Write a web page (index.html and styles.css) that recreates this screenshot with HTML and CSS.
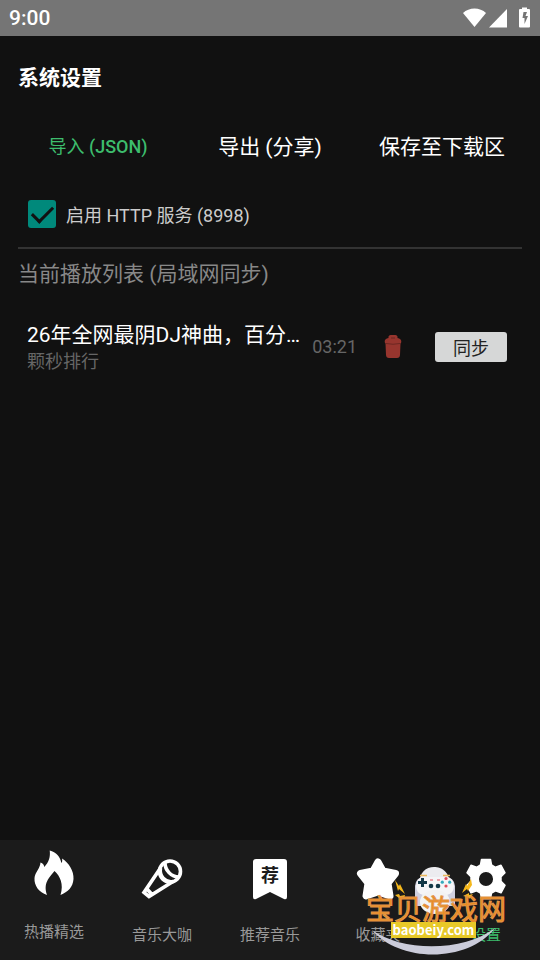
FILE: index.html
```html
<!DOCTYPE html>
<html lang="zh-CN">
<head>
<meta charset="utf-8">
<meta name="viewport" content="width=device-width, initial-scale=1">
<title>系统设置</title>
<link rel="stylesheet" href="styles.css">
</head>
<body>
<div class="app">
  <header class="status">
    <span class="clock">9:00</span>
    <svg class="status-icons" width="70" height="22" viewBox="0 0 70 22" fill="#fff" aria-hidden="true">
      <path d="M0 6C6 0 17 0 23 6L11.500 20Z"/>
      <path d="M26 20.500L44 2V20.500Z"/>
      <path fill-rule="evenodd" d="M57 2h2V0.500h5V2h2q1 0 1 1v16.500q0 1-1 1h-9q-1 0-1-1V3q0-1 1-1zM60.500 5l-1 6h2v6l3.500-8h-2.500l1.500-4z"/>
    </svg>
  </header>

  <main class="content">
    <h1 class="title">系统设置</h1>
    <div class="actions">
      <button class="action action-import" type="button">导入 <span class="format">(JSON)</span></button>
      <button class="action" type="button">导出 (分享)</button>
      <button class="action" type="button">保存至下载区</button>
    </div>
    <label class="service" for="http">
      <input class="check" type="checkbox" id="http" checked>
      <span>启用 HTTP 服务 (8998)</span>
    </label>
    <h2 class="subtitle">当前播放列表 (局域网同步)</h2>
    <ul class="list">
      <li class="song">
        <div class="info">
          <div class="name">26年全网最阴DJ神曲，百分…</div>
          <div class="artist">颗秒排行</div>
        </div>
        <span class="time">03:21</span>
        <button class="delete" type="button" aria-label="删除">
          <svg width="18" height="26" viewBox="0 0 18 26" aria-hidden="true">
            <path fill="#97352e" d="M4.500 4V2.500Q5 1 6.500 1h5Q13 1 13.500 2.500V4q3.800.5 3.800 3.500Q17.300 9 16.500 9.500L16 21q-.2 3-3 3H5q-2.800 0-3-3L1.500 9.500Q.7 9 .7 7.500Q.7 4.500 4.500 4z"/>
            <path d="M7 4h4M2 9.500Q9 11 16 9.500" fill="none" stroke="#6d2722" stroke-width="1"/>
          </svg>
        </button>
        <button class="sync" type="button">同步</button>
      </li>
    </ul>
  </main>

  <footer class="bottom">
    <nav class="tabs">
      <a class="tab tab-hot" href="#hot">
        <svg class="tab-icon" width="42" height="48" viewBox="0 0 42 48" aria-hidden="true">
          <path fill="#fff" d="M14 46C6 43 1 37 1.500 29C2 23 7 20 7.500 13.500C10 14 11 16 11.300 18C16 13 17.500 8 16.700 1.500C23 3 27.500 8 28.300 14C29.200 13 29.500 11.500 29 9.500C36 14 41 22 40.500 30C40 38 35 43 27.500 46C31 35 27 27 21.500 22C16 29 10 34 14 46Z"/>
        </svg>
        <span>热播精选</span>
      </a>
      <a class="tab" href="#artists">
        <svg class="tab-icon" width="42" height="48" viewBox="0 0 42 48" fill="none" stroke="#fff" stroke-width="3.600" aria-hidden="true">
          <circle cx="29" cy="16.500" r="10.500"/>
          <path d="M19.500 13L3 37.500L8 41.500L32 26.500M19.500 13C18 21 24 28 32 26.500M24 8C24 15 30 22 38 22M6 34L11 39.500"/>
        </svg>
        <span>音乐大咖</span>
      </a>
      <a class="tab" href="#recommend">
        <span class="tab-icon ribbon">
          <svg width="36" height="48" viewBox="0 0 36 48" aria-hidden="true">
            <path fill="#fff" d="M4 4h28q3 0 3 3v35q0 3-3 2L18 37L4 44q-3 1-3-2V7q0-3 3-3z"/>
          </svg>
          <b class="ribbon-text">荐</b>
        </span>
        <span>推荐音乐</span>
      </a>
      <a class="tab" href="#favorites">
        <svg class="tab-icon" width="44" height="48" viewBox="0 0 44 48" aria-hidden="true">
          <path fill="#fff" stroke="#fff" stroke-width="7" stroke-linejoin="round" d="M22 7l5 9 12.500 2.500-7.500 9.500 2 13-12-4-12 4 2-13-7.500-9.500L17 16z"/>
        </svg>
        <span>收藏夹</span>
      </a>
      <a class="tab tab-active" href="#settings">
        <svg class="tab-icon" width="42" height="48" viewBox="0 0 42 48" aria-hidden="true">
          <path fill="#fff" stroke="#fff" stroke-width="1.500" stroke-linejoin="round" fill-rule="evenodd" d="M16.500 4.500h9l1 5.500 4 2.300 5.500-2 4 7.500-4 4v4.500l4 4-4 7.500-5.500-2-4 2.300-1 5.400h-9l-1-5.400-4-2.300-5.500 2-4-7.500 4-4v-4.500l-4-4 4-7.500 5.500 2 4-2.300zM21 16.200a7.800 7.800 0 1 0 0 15.600a7.800 7.800 0 1 0 0-15.600z"/>
        </svg>
        <span>设置</span>
      </a>
    </nav>
    <div class="brand">
      <svg class="brand-art" width="144" height="94" viewBox="0 0 144 94" aria-hidden="true">
        <g fill="#f5b81c">
          <path d="M31 14l4 6 1-2 5 10-6-5-1 2zM31 29l4-1 1 2 5-1-1 4-4-2-1 1z"/>
          <path d="M107 13l-4 7-1-2-4 9 5-4 1 2 4-6zM99 30l6-3v2l4-1-4 5-1-2z"/>
        </g>
        <path fill="#ececef" d="M55 20C55 6 62 1 70 1s16 5 16 19z"/>
        <path fill="#cfd0df" d="M60 11Q52 11 51 20L51 40H91L91 20Q90 11 81 11L70 14z"/>
        <path fill="#f5f5f7" d="M60 11Q53 11 52 20Q52 27 59 29L70 26L83 29Q90 27 90 20Q89 11 82 11z"/>
        <ellipse cx="71" cy="36" rx="15" ry="12" fill="#f3f3f3"/>
        <path stroke="#e9b75a" stroke-width="1.500" d="M56 9.500h7M79 9.500h7"/>
        <path stroke="#123747" stroke-width="3" d="M54 16.500h9M58.500 12v9"/>
        <g fill="#123747"><circle cx="67" cy="20" r="2.300"/><circle cx="74" cy="20" r="2.300"/></g>
        <g fill="#df4d5a"><circle cx="82" cy="12.500" r="1.600"/><circle cx="82" cy="20" r="1.600"/><path d="M66 13.500h3v1h-3zM73 13.500h3v1h-3z"/></g>
        <g fill="#36aabd"><circle cx="78.300" cy="16.200" r="1.600"/><circle cx="85.700" cy="16.200" r="1.600"/></g>
        <path fill="#cbccda" d="M8 64C38 86 100 86 131 62C104 97 36 97 8 64z"/>
      </svg>
      <span class="brand-name">宝贝游戏网</span>
      <span class="brand-url">baobeiy.com</span>
    </div>
  </footer>
</div>
</body>
</html>
```
FILE: styles.css
```css
* { box-sizing: border-box; }

body {
  margin: 0;
  background: #111;
  color: #fff;
  font-family: Roboto, "Noto Sans CJK SC", sans-serif;
}

h1, h2, ul { margin: 0; padding: 0; list-style: none; }

button {
  border: 0;
  padding: 0;
  background: none;
  color: inherit;
  font-family: inherit;
}

.app {
  min-height: 100vh;
  display: flex;
  flex-direction: column;
}

.status {
  height: 36px;
  padding: 0 7px 0 9px;
  background: #757575;
  display: flex;
  align-items: center;
  justify-content: space-between;
}

.clock { font-size: 21px; line-height: 36px; font-weight: 500; }

.content {
  flex: 1;
  padding: 25px 18px;
}

.title {
  font-size: 21px;
  line-height: 34px;
  font-weight: 700;
}

.actions {
  display: grid;
  grid-template-columns: 20fr 23fr 20fr;
  margin-top: 14px;
}

.action {
  height: 72px;
  font-size: 21px;
  white-space: nowrap;
}

.action-import { font-size: 18px; color: #3dbd6d; }

.format { font-weight: 500; }

.service {
  display: flex;
  align-items: center;
  gap: 10px;
  height: 68px;
  padding-left: 10px;
  border-bottom: 2px solid #333;
  font-size: 18px;
  color: #ccc;
}

.check {
  appearance: none;
  width: 28px;
  height: 28px;
  margin: 0;
  border-radius: 3px;
  background: #00897b;
  display: grid;
  place-items: center;
}

.check:checked::before {
  content: "";
  width: 18px;
  height: 9px;
  margin-bottom: 5px;
  border: solid #111;
  border-width: 0 0 3px 3px;
  transform: rotate(-45deg);
}

.subtitle {
  margin-top: 8px;
  font-size: 21px;
  line-height: 34px;
  font-weight: 400;
  color: #888;
}

.song {
  display: flex;
  align-items: center;
  margin-top: 20px;
  padding: 9px;
}

.info { flex: 1; min-width: 0; }

.name {
  font-size: 21px;
  line-height: 30px;
  overflow: hidden;
  white-space: nowrap;
  text-overflow: ellipsis;
}

.artist {
  font-size: 18px;
  line-height: 24px;
  color: #666;
}

.time {
  font-size: 18px;
  line-height: 24px;
  color: #666;
}

.delete {
  display: flex;
  justify-content: center;
  width: 72px;
}

.sync {
  width: 72px;
  height: 30px;
  margin: 0 6px;
  border-radius: 3px;
  background: #d6d7d7;
  color: #222;
  font-size: 18px;
}

.bottom {
  position: relative;
  background: #1b1b1b;
}

.tabs {
  display: grid;
  grid-template-columns: repeat(5, 1fr);
  height: 120px;
}

.tab {
  display: flex;
  flex-direction: column;
  align-items: center;
  gap: 20px;
  padding-top: 15px;
  color: #999;
  font-size: 15px;
  line-height: 24px;
  text-decoration: none;
}

.tab-hot { padding-top: 9px; gap: 23px; }

.tab-active { color: #3dbd6d; }

.tab-icon { height: 48px; }

.ribbon { position: relative; }

.ribbon-text {
  position: absolute;
  inset: 9px 0 auto;
  text-align: center;
  font-size: 18px;
  color: #1b1b1b;
}

.brand {
  position: absolute;
  right: 32px;
  bottom: 0;
  width: 144px;
  height: 94px;
  pointer-events: none;
}

.brand-art { display: block; }

.brand-name {
  position: absolute;
  inset: 29px 0 auto;
  text-align: center;
  font-size: 28px;
  line-height: 32px;
  white-space: nowrap;
  color: #ee8c1c;
  -webkit-text-stroke: 1px #e2954a;
}

.brand-url {
  position: absolute;
  left: 27px;
  top: 56px;
  width: 85px;
  text-align: center;
  font: 700 13px/16px "Noto Sans CJK SC", sans-serif;
  background: #e8c928;
}
```
